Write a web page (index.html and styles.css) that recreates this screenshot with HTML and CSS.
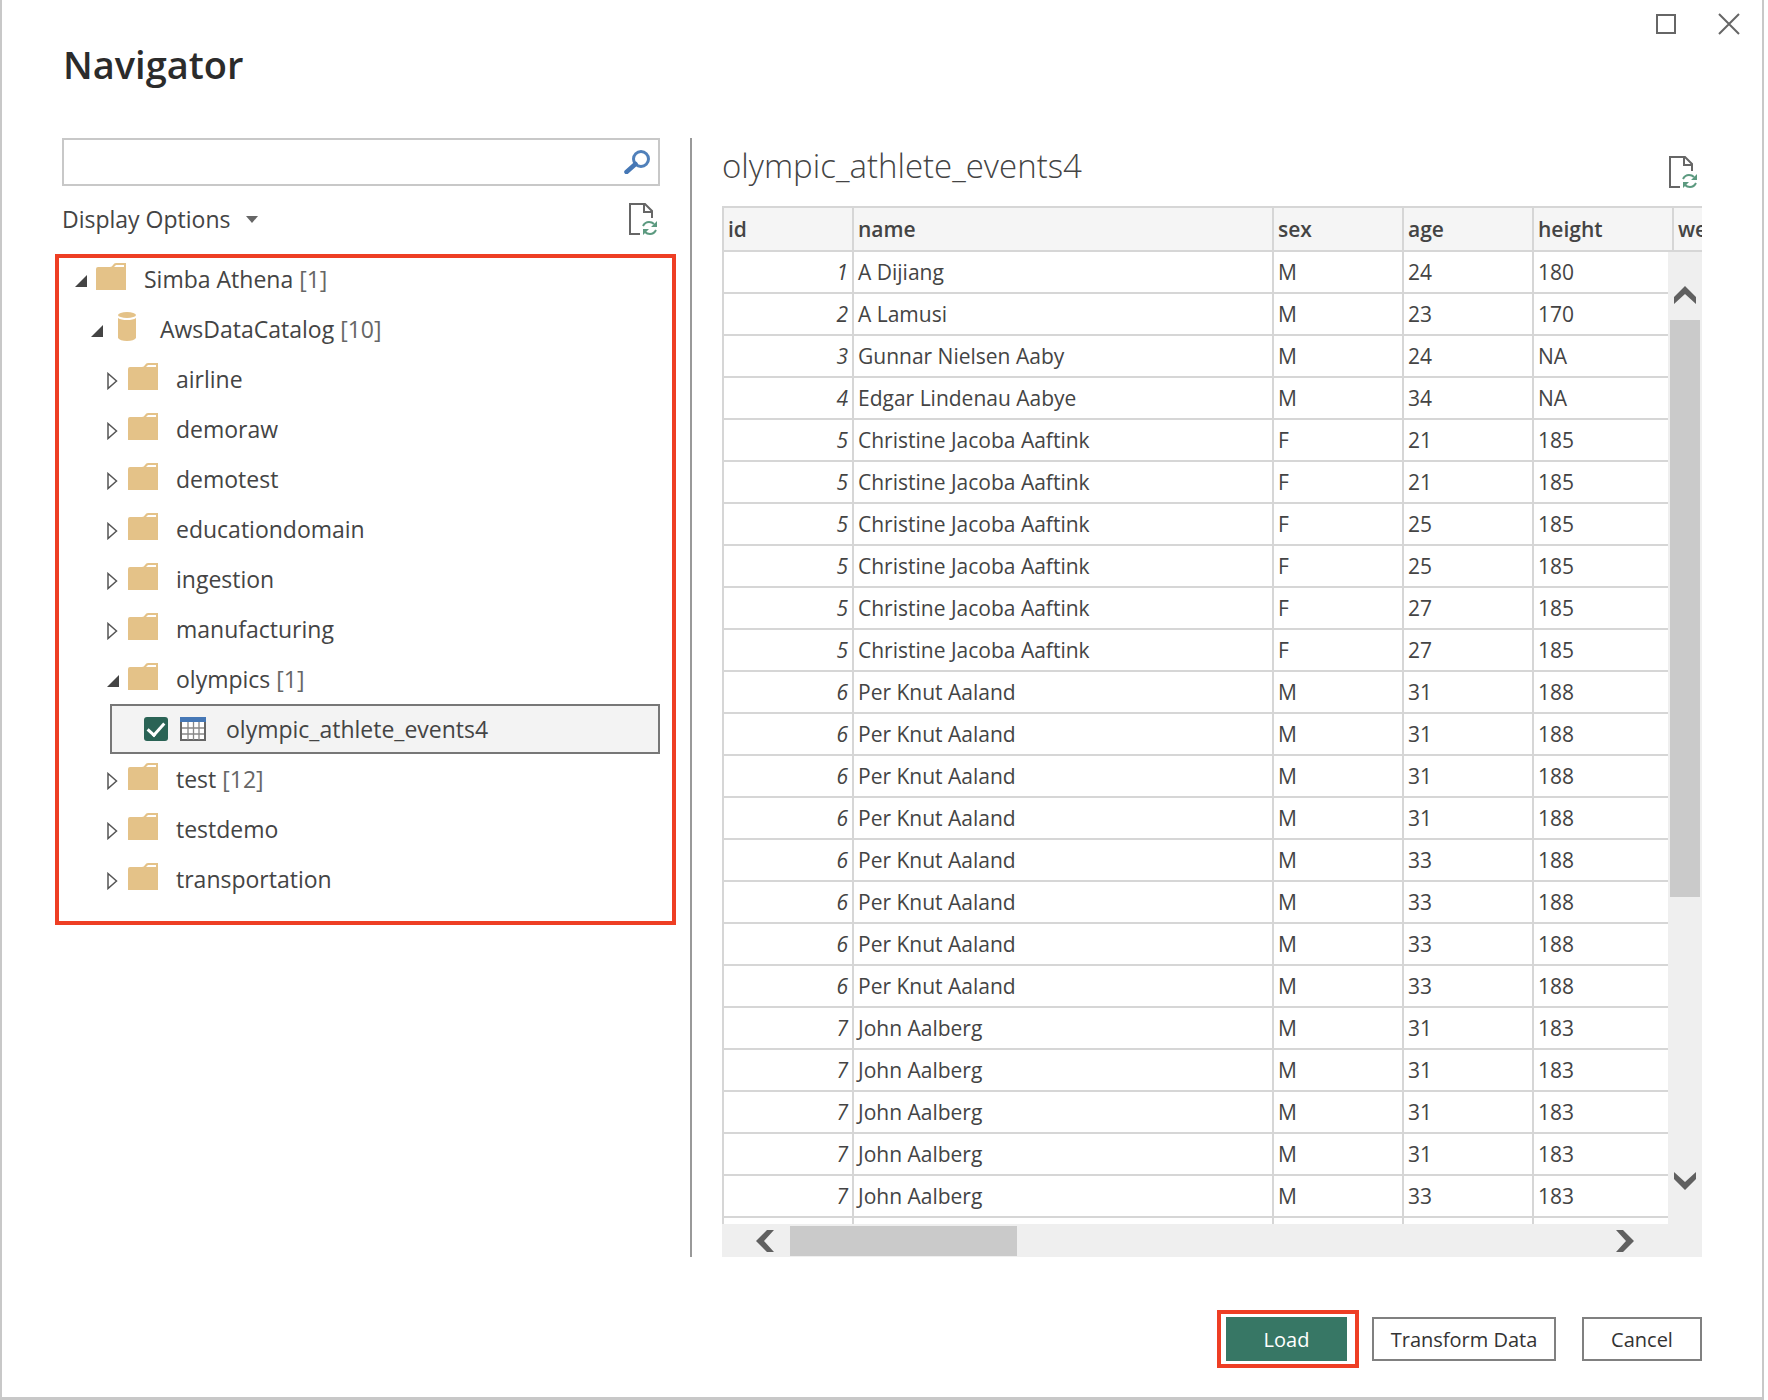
FILE: index.html
```html
<!DOCTYPE html>
<html lang="en">
<head>
  <meta charset="UTF-8">
  <meta name="viewport" content="width=device-width, initial-scale=1.0">
  <title>Navigator</title>
  <link rel="stylesheet" href="styles.css">
</head>
<body>
  <!-- shared icons -->
  <svg class="sprite" aria-hidden="true">
    <symbol id="folder" viewBox="0 0 30 27">
      <path d="M0 6Q0 4 2 4H14Q16 4 17 2Q18 0 20 0H30V27H0Z" fill="#e4c288"/>
      <path d="M18 4L20 2H28V4Z" fill="#fff"/>
    </symbol>
    <symbol id="database" viewBox="0 0 18 29">
      <ellipse cx="9" cy="3" rx="9" ry="3" fill="#e4c288"/>
      <path d="M0 6Q3 8 9 8T18 6V26Q16 29 9 29T0 26Z" fill="#e4c288"/>
    </symbol>
    <symbol id="open" viewBox="0 0 12 12">
      <path d="M12 0V12H0Z" fill="#444"/>
    </symbol>
    <symbol id="closed" viewBox="0 0 11 18">
      <path d="M1 1.500L9.500 9L1 16.500Z" fill="#fff" stroke="#555" stroke-width="1.500"/>
    </symbol>
    <symbol id="refresh" viewBox="0 0 30 34">
      <path d="M12 32H2V2H17L24 9V16" fill="none" stroke="#666" stroke-width="2"/>
      <path d="M16 2V10H24" fill="none" stroke="#666" stroke-width="2"/>
      <path d="M15 24Q17 20 21 20Q24 20 26 22M28 28Q26 32 22 32Q19 32 17 30" fill="none" stroke="#5c9a80" stroke-width="2"/>
      <path d="M29 19V25H23ZM15 33V27H21Z" fill="#5c9a80"/>
    </symbol>
    <symbol id="sheet" viewBox="0 0 26 24">
      <path d="M1 1H25V23H1Z" fill="#fff" stroke="#666" stroke-width="2"/>
      <path d="M0 0H26V5H0Z" fill="#4577b5"/>
      <path d="M2 11H24M2 17H24M8 5V23M13.500 5V23M19 5V23" stroke="#888" stroke-width="1.300"/>
    </symbol>
    <symbol id="chevron" viewBox="0 0 22 18">
      <path d="M0 11L11 0L22 11V18L11 8L0 18Z" fill="#606060"/>
    </symbol>
  </svg>

  <div class="dialog">
    <header class="titlebar">
      <h1>Navigator</h1>
      <div class="window-buttons">
        <button type="button" aria-label="Maximize">
          <svg width="20" height="20"><path d="M1 1H19V19H1Z" fill="none" stroke="#666" stroke-width="2"/></svg>
        </button>
        <button type="button" aria-label="Close">
          <svg width="22" height="22"><path d="M1 1L21 21M21 1L1 21" stroke="#666" stroke-width="2"/></svg>
        </button>
      </div>
    </header>

    <main class="content">
      <section class="sidebar">
        <div class="search">
          <input type="text" id="search" aria-label="Search">
          <button type="button" aria-label="Search">
            <svg width="26" height="24" viewBox="0 0 26 24">
              <circle cx="17" cy="9" r="7.500" fill="none" stroke="#5080ba" stroke-width="3"/>
              <path d="M11.500 14L2.500 22" stroke="#4577b5" stroke-width="4.500" stroke-linecap="round"/>
            </svg>
          </button>
        </div>
        <div class="options">
          <button type="button" class="display-options">Display Options
            <svg width="12" height="7"><path d="M0 0H12L6 7Z" fill="#666"/></svg>
          </button>
          <button type="button" aria-label="Refresh"><svg width="30" height="34"><use href="#refresh"/></svg></button>
        </div>

        <ul class="tree">
          <li>
            <div class="node level0"><span class="arrow"><svg width="12" height="12"><use href="#open"/></svg></span><span class="icon"><svg width="30" height="27"><use href="#folder"/></svg></span>Simba Athena&nbsp;<em>[1]</em></div>
          </li>
          <li>
            <div class="node level1"><span class="arrow"><svg width="12" height="12"><use href="#open"/></svg></span><span class="icon db"><svg width="18" height="29"><use href="#database"/></svg></span>AwsDataCatalog&nbsp;<em>[10]</em></div>
          </li>
          <li>
            <div class="node"><span class="arrow"><svg width="11" height="18"><use href="#closed"/></svg></span><span class="icon"><svg width="30" height="27"><use href="#folder"/></svg></span>airline</div>
          </li>
          <li>
            <div class="node"><span class="arrow"><svg width="11" height="18"><use href="#closed"/></svg></span><span class="icon"><svg width="30" height="27"><use href="#folder"/></svg></span>demoraw</div>
          </li>
          <li>
            <div class="node"><span class="arrow"><svg width="11" height="18"><use href="#closed"/></svg></span><span class="icon"><svg width="30" height="27"><use href="#folder"/></svg></span>demotest</div>
          </li>
          <li>
            <div class="node"><span class="arrow"><svg width="11" height="18"><use href="#closed"/></svg></span><span class="icon"><svg width="30" height="27"><use href="#folder"/></svg></span>educationdomain</div>
          </li>
          <li>
            <div class="node"><span class="arrow"><svg width="11" height="18"><use href="#closed"/></svg></span><span class="icon"><svg width="30" height="27"><use href="#folder"/></svg></span>ingestion</div>
          </li>
          <li>
            <div class="node"><span class="arrow"><svg width="11" height="18"><use href="#closed"/></svg></span><span class="icon"><svg width="30" height="27"><use href="#folder"/></svg></span>manufacturing</div>
          </li>
          <li>
            <div class="node"><span class="arrow"><svg width="12" height="12"><use href="#open"/></svg></span><span class="icon"><svg width="30" height="27"><use href="#folder"/></svg></span>olympics&nbsp;<em>[1]</em></div>
          </li>
          <li>
            <div class="node selected">
              <input type="checkbox" id="events4" checked>
              <label for="events4"><svg width="26" height="24"><use href="#sheet"/></svg>olympic_athlete_events4</label>
            </div>
          </li>
          <li>
            <div class="node"><span class="arrow"><svg width="11" height="18"><use href="#closed"/></svg></span><span class="icon"><svg width="30" height="27"><use href="#folder"/></svg></span>test&nbsp;<em>[12]</em></div>
          </li>
          <li>
            <div class="node"><span class="arrow"><svg width="11" height="18"><use href="#closed"/></svg></span><span class="icon"><svg width="30" height="27"><use href="#folder"/></svg></span>testdemo</div>
          </li>
          <li>
            <div class="node"><span class="arrow"><svg width="11" height="18"><use href="#closed"/></svg></span><span class="icon"><svg width="30" height="27"><use href="#folder"/></svg></span>transportation</div>
          </li>
        </ul>
      </section>

      <section class="preview">
        <div class="preview-head">
          <h2>olympic_athlete_events4</h2>
          <button type="button" aria-label="Refresh preview"><svg width="30" height="34"><use href="#refresh"/></svg></button>
        </div>
        <div class="grid">
          <div class="table-wrap">
            <table>
              <colgroup>
                <col class="col-s"><col class="col-name"><col class="col-s"><col class="col-s"><col class="col-m"><col class="col-s">
              </colgroup>
              <thead>
                <tr><th>id</th><th>name</th><th>sex</th><th>age</th><th>height</th><th>weight</th></tr>
              </thead>
              <tbody id="rows"></tbody>
            </table>
          </div>
          <div class="vscroll">
            <button type="button" aria-label="Scroll up"><svg width="22" height="18"><use href="#chevron"/></svg></button>
            <div class="track"><div class="thumb"></div></div>
            <button type="button" class="down" aria-label="Scroll down"><svg width="22" height="18"><use href="#chevron"/></svg></button>
          </div>
          <div class="hscroll">
            <button type="button" class="left" aria-label="Scroll left"><svg width="22" height="18"><use href="#chevron"/></svg></button>
            <div class="track"><div class="thumb"></div></div>
            <button type="button" class="right" aria-label="Scroll right"><svg width="22" height="18"><use href="#chevron"/></svg></button>
          </div>
        </div>
      </section>
    </main>

    <footer class="actions">
      <div class="highlight"><button type="button" class="btn primary">Load</button></div>
      <button type="button" class="btn wide">Transform Data</button>
      <button type="button" class="btn">Cancel</button>
    </footer>
  </div>

<script>
  const athletes = [
    [1, "A Dijiang", "M", 24, "180"],
    [2, "A Lamusi", "M", 23, "170"],
    [3, "Gunnar Nielsen Aaby", "M", 24, "NA"],
    [4, "Edgar Lindenau Aabye", "M", 34, "NA"],
    [5, "Christine Jacoba Aaftink", "F", 21, "185"],
    [5, "Christine Jacoba Aaftink", "F", 21, "185"],
    [5, "Christine Jacoba Aaftink", "F", 25, "185"],
    [5, "Christine Jacoba Aaftink", "F", 25, "185"],
    [5, "Christine Jacoba Aaftink", "F", 27, "185"],
    [5, "Christine Jacoba Aaftink", "F", 27, "185"],
    [6, "Per Knut Aaland", "M", 31, "188"],
    [6, "Per Knut Aaland", "M", 31, "188"],
    [6, "Per Knut Aaland", "M", 31, "188"],
    [6, "Per Knut Aaland", "M", 31, "188"],
    [6, "Per Knut Aaland", "M", 33, "188"],
    [6, "Per Knut Aaland", "M", 33, "188"],
    [6, "Per Knut Aaland", "M", 33, "188"],
    [6, "Per Knut Aaland", "M", 33, "188"],
    [7, "John Aalberg", "M", 31, "183"],
    [7, "John Aalberg", "M", 31, "183"],
    [7, "John Aalberg", "M", 31, "183"],
    [7, "John Aalberg", "M", 31, "183"],
    [7, "John Aalberg", "M", 33, "183"],
    ["", "", "", "", ""]
  ];

  const tbody = document.getElementById("rows");
  athletes.forEach(a => {
    const tr = document.createElement("tr");
    a.concat("").forEach(value => {
      const td = document.createElement("td");
      td.textContent = value;
      tr.appendChild(td);
    });
    tbody.appendChild(tr);
  });
</script>
</body>
</html>
```
FILE: styles.css
```css
* { box-sizing: border-box; }
body { margin: 0; background: #fff; color: #444; font-family: "Open Sans", "Noto Sans", sans-serif; font-size: 20px; }
h1, h2 { margin: 0; }
svg { display: block; flex: none; }
button { padding: 0; border: none; background: none; color: inherit; font: inherit; cursor: pointer; }
.sprite { position: absolute; width: 0; height: 0; }

.dialog { display: flex; flex-direction: column; height: 100vh; min-height: 1100px; margin-right: 4px; padding: 0 60px 0 53px; border: 2px solid #c8c8c8; border-top: none; border-bottom-width: 3px; }
.titlebar { display: flex; justify-content: space-between; height: 138px; flex: none; }
.titlebar h1 { padding: 38px 0 0 8px; font-size: 38px; line-height: 52px; font-weight: 600; color: #2b2b2b; }
.window-buttons { display: flex; align-items: center; gap: 42px; height: 48px; margin-right: -38px; }

.content { display: flex; flex: 1; min-height: 0; }
.sidebar { width: 637px; flex: none; padding-right: 14px; border-right: 2px solid #999; }
.search { display: flex; align-items: center; height: 48px; margin: 0 16px 0 7px; padding-right: 8px; border: 2px solid #c8c8c8; }
.search input { flex: 1; height: 40px; padding: 0 8px; border: none; outline: none; font: inherit; }
.options { display: flex; justify-content: space-between; align-items: center; height: 68px; margin: 0 18px 0 7px; padding-bottom: 2px; }
.display-options { display: flex; align-items: center; gap: 16px; font-size: 23px; }

.tree { margin: 0; padding: 0 16px 20px; height: 671px; list-style: none; outline: 4px solid #ee3e24; outline-offset: -4px; }
.node { display: flex; align-items: center; height: 50px; padding-left: 36px; font-size: 23px; }
.node em { font-style: normal; color: #666; }
.level0 { padding-left: 4px; }
.level1 { padding-left: 20px; }
.arrow { width: 21px; padding-top: 4px; }
.icon { width: 48px; padding-bottom: 6px; }
.icon.db { padding-left: 6px; }
.selected { margin-left: 39px; padding-left: 32px; background: #f3f3f3; border: 2px solid #777; }
.selected label { display: flex; align-items: center; gap: 20px; }
.selected input { appearance: none; width: 24px; height: 24px; margin: 0 12px 0 0; border-radius: 3px; background: #2a6355; display: grid; place-items: center; }
.selected input:checked::before { content: ""; width: 7px; height: 14px; margin-bottom: 4px; border: solid #fff; border-width: 0 3px 3px 0; transform: rotate(42deg); }

.preview { display: flex; flex-direction: column; flex: 1; min-width: 0; padding-left: 30px; }
.preview-head { display: flex; justify-content: space-between; height: 68px; flex: none; }
.preview-head h2 { font-size: 33px; line-height: 56px; font-weight: 300; }
.preview-head button { padding-right: 4px; }

.grid { display: grid; grid-template-columns: minmax(0, 1fr) 34px; grid-template-rows: 46px minmax(0, 1fr) 33px; flex: 1; min-height: 0; }
.table-wrap { grid-area: 1 / 1 / 3 / 3; overflow: hidden; }
table { width: 1082px; border-collapse: collapse; table-layout: fixed; font-size: 21px; }
.col-s { width: 130px; }
.col-m { width: 140px; }
.col-name { width: 420px; }
th, td { height: 42px; padding: 0 4px; border: 2px solid #d6d6d6; text-align: left; line-height: 28px; white-space: nowrap; }
th { height: 44px; background: #f5f5f5; font-weight: 600; }
td:first-child { text-align: right; font-style: italic; }

.vscroll { grid-area: 2 / 2; display: flex; flex-direction: column; align-items: center; padding: 34px 0; background: #efefef; }
.hscroll { grid-area: 3 / 1 / 4 / 3; display: flex; align-items: center; padding: 0 66px 0 32px; background: #efefef; }
.track { flex: 1; }
.vscroll .track { width: 30px; margin: 16px 0; }
.vscroll .thumb { height: 69%; background: #cacaca; }
.hscroll .track { margin: 0 14px; }
.hscroll .thumb { width: 28%; height: 30px; background: #cacaca; }
.down { transform: rotate(180deg); }
.left { transform: rotate(-90deg); }
.right { transform: rotate(90deg); }

.actions { display: flex; justify-content: flex-end; align-items: center; flex: none; height: 140px; padding-top: 24px; }
.btn { width: 120px; height: 44px; border: 2px solid #808080; background: #fff; color: #333; }
.btn.wide { width: 184px; margin: 0 26px 0 13px; }
.btn.primary { display: block; width: 121px; border: none; background: #377765; color: #fff; }
.highlight { padding: 3px 8px 3px 5px; border: 4px solid #ee3e24; }
```
